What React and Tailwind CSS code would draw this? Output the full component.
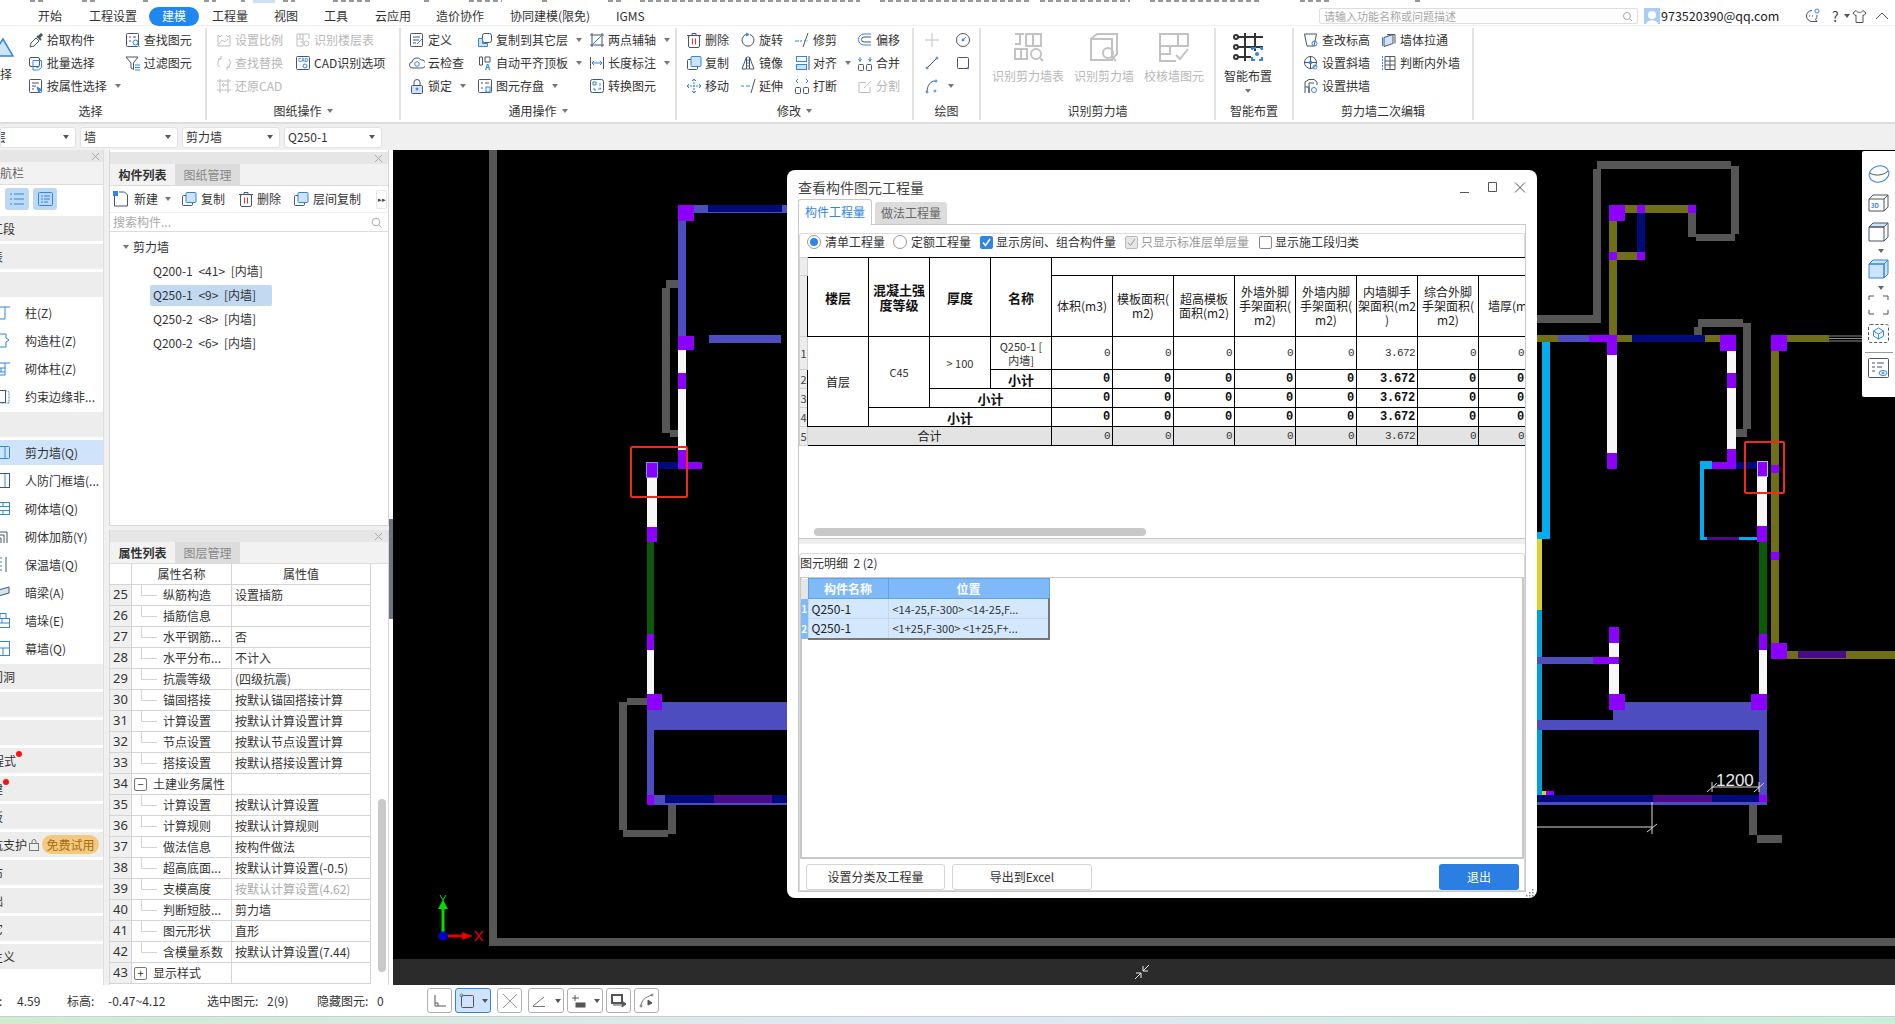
import React from "react";

const D = "#4a5464";
const B = "#2f86e6";
const G = "#bdbdbd";
const L = "#cfe3fb";

const Svg = ({ s = 16, w, h, vb, c = D, children }) => (
  <svg width={w || s} height={h || s} viewBox={vb || `0 0 ${s} ${s}`} fill="none" stroke={c} strokeWidth="1" className="shrink-0">
    {children}
  </svg>
);

const icons = {
  pick: <><path d="M2 15l1-4 5-5 3 3-5 5z" /><path d="M9 4l4 4" stroke={D} strokeWidth="2" /><path d="M11 5l3-3" stroke={D} strokeWidth="3" /></>,
  batch: <><rect x="1.500" y="2.500" width="10" height="9" rx="1.500" /><path d="M5 5.500h8.500v7l-3 2.500H5z" stroke={B} /><path d="M7.500 11l2 2 2.500-3" stroke={B} /></>,
  attr: <><rect x="1.500" y="1.500" width="12" height="13" rx="1" /><path d="M4 5h7M4 8h4M4 11h2" /><path d="M9 9l5 3-2 .5-1 2.500z" fill={B} stroke={B} /></>,
  find: <><rect x="1.500" y="1.500" width="12" height="13" rx="1" /><path d="M4 5h2M8 5h3M4 9h2" /><circle cx="10.500" cy="10.500" r="2.500" stroke={B} /><path d="M12.500 12.500l2 2" stroke={B} /></>,
  filter: <><path d="M1 2h12L8.500 8v6.500L6 13V8z" /><path d="M10 10h5M10 12.500h5M10 15h5" stroke={B} /></>,
  dscale: <><path d="M2 3v11h12V3M2 3l2 2 2-2M10 3l2 2 2-2M3 12l3-4 3 2 3-3" stroke={G} /></>,
  dreplace: <><path d="M3 12a6 6 0 0 1 2-9M13 4a6 6 0 0 1-2 9M5 1v3H2M11 15v-3h3" stroke={G} /></>,
  drestore: <><path d="M1 3h14M4 1v14M12 1v14M1 12h14" stroke={G} /><path d="M6 7h6M8 5l-2 2 2 2" stroke={G} /></>,
  dfloor: <><path d="M2 2h6v5H2zM5 2v5M8 2h6v5M2 7v7h6V7M5 10h3" stroke={G} /><circle cx="11.500" cy="11.500" r="2.500" stroke={G} /></>,
  cad: <><rect x="1.500" y="1.500" width="13" height="13" rx="1" /><text x="3" y="7" fontSize="5" fill={B} stroke="none" fontWeight="700">CAD</text><circle cx="10" cy="11" r="2" stroke={B} /></>,
  def: <><rect x="1.500" y="1.500" width="12" height="13" rx="1" /><path d="M4 5h7M4 8h6M4 11h3" /><path d="M8 12l6-6" stroke={B} /></>,
  cloud: <><path d="M4 13a3 3 0 0 1-1-6 5 5 0 0 1 9-2 4 4 0 0 1 1 8z" /><circle cx="8" cy="9" r="2.300" stroke={B} /></>,
  lock: <><rect x="2.500" y="7.500" width="11" height="8" rx="1" fill={L} stroke={D} /><path d="M5 7V4.500a3 3 0 0 1 6 0V7" /><circle cx="8" cy="11" r="1" fill={B} stroke={B} /></>,
  copyf: <><rect x="5.500" y="1.500" width="9" height="9" rx="2" /><path d="M1.500 6.500h4v5h5v3h-9z" fill={L} stroke={B} /></>,
  align: <><path d="M2.500 2v8M5.500 2v8M2.500 2h3M2.500 10h3" /><path d="M8 2h5v5H8z" /><text x="8" y="15" fontSize="8" fill={B} stroke="none" fontWeight="700">A</text></>,
  save: <><rect x="1.500" y="1.500" width="13" height="13" rx="1" /><path d="M4 5h2M8 5h4M4 10h2" /><rect x="9" y="9" width="4" height="5" stroke={B} /></>,
  axis: <><path d="M3 1v14M13 1v14M1 3h14M1 13h14" /><path d="M2 14L14 2" stroke={B} /></>,
  dim: <><path d="M1.500 2v12M14.500 2v12" /><path d="M3 8h10M5 6L3 8l2 2M11 6l2 2-2 2" stroke={B} /></>,
  conv: <><rect x="1.500" y="1.500" width="13" height="13" rx="2" /><path d="M4 4h3v3H4zM5 10v2h2M11 5v3M9 11h3l-1-1.500" stroke={B} /></>,
  del: <><rect x="2.500" y="3.500" width="11" height="12" rx="1.500" /><path d="M1 3.500h14M6 3V1.500h4V3" /><path d="M6.500 6.500v6M9.500 6.500v6" stroke="#e02f2f" /></>,
  rotate: <><path d="M10 2.500a6 6 0 1 1-4 0" /><path d="M6 1l3 1.500L6 4" fill={B} stroke={B} /></>,
  trim: <><path d="M1 9h4M6 9h2" stroke={B} /><path d="M14 1l-5 14" stroke={D} /><path d="M10 9h5" stroke={B} strokeDasharray="1 1.500" /></>,
  offset: <><path d="M14 2H7a5 5 0 0 0 0 11h7" stroke={B} /><path d="M14 5H7a2.500 2.500 0 0 0 0 5h7" /></>,
  copy: <><rect x="1.500" y="4.500" width="10" height="10" rx="1" /><rect x="5" y="1.500" width="10" height="10" rx="1" fill={L} stroke={B} /></>,
  mirror: <><path d="M6.500 2L2 14h4.500zM9.500 2L14 14H9.500z" /><path d="M8 1v14" stroke={B} strokeDasharray="2 1" /></>,
  alignb: <><rect x="2.500" y="1.500" width="10" height="5" stroke={B} /><rect x="2.500" y="9.500" width="10" height="5" fill={L} stroke={B} /><path d="M15 1v14" /></>,
  merge: <><rect x="1.500" y="9.500" width="5" height="6" rx="1" /><rect x="9.500" y="9.500" width="5" height="6" rx="1" /><path d="M3 2v5M13 2v5M1.500 4l1.500 2 1.500-2M11.500 4l1.500 2 1.500-2" stroke={B} /></>,
  move: <><path d="M8 1v14M1 8h14" stroke={B} strokeDasharray="2 1" /><path d="M6 3l2-2 2 2M6 13l2 2 2-2M3 6L1 8l2 2M13 6l2 2-2 2" stroke={B} /></>,
  extend: <><path d="M1 8h3M6 8h3" stroke={B} /><path d="M15 1l-4 14" /><path d="M10 8h-1" stroke={B} /></>,
  brk: <><rect x="1.500" y="9.500" width="5" height="6" rx="1" /><rect x="9.500" y="9.500" width="5" height="6" rx="1" /><path d="M2 3l2-2M2 3l2 2M14 3l-2-2M14 3l-2 2" stroke={B} /></>,
  split: <><path d="M13 9v5.500H2v-10h7" stroke={G} /><path d="M7 10l7-7" stroke={G} /></>,
  dot: <><path d="M8 1v5M8 10v5M1 8h5M10 8h5" stroke={G} /><circle cx="8" cy="8" r="1.200" stroke={G} /></>,
  circ: <><circle cx="8" cy="8" r="6.500" /><path d="M8 8l3-3" stroke={B} /><circle cx="8" cy="8" r="1" fill={B} stroke={B} /></>,
  line: <><path d="M3 13L13 3" /><circle cx="3" cy="13" r="1" stroke={B} /><circle cx="13" cy="3" r="1" stroke={B} /></>,
  rect: <><rect x="2.500" y="2.500" width="11" height="11" rx="1" /><circle cx="13" cy="13" r=".8" fill={B} stroke={B} /></>,
  arc: <><path d="M3 14C3 7 7 3 11 3" /><circle cx="3" cy="14" r="1" stroke={B} /><circle cx="12" cy="3" r="1" stroke={B} /><circle cx="11" cy="13" r="1" stroke={B} /></>,
  elev: <><path d="M1.500 2h12L11 14H4z" /><circle cx="11.500" cy="11.500" r="2.500" stroke={B} /></>,
  pull: <><path d="M3 5.500l9-3v9l-9 3z" fill={L} stroke={D} /><path d="M6 2.500h8v9" /><path d="M1.500 5v9" stroke={B} /></>,
  slant: <><circle cx="7.500" cy="7.500" r="6" /><path d="M7.500 1v13M1 7.500h13" /><circle cx="7.500" cy="7.500" r="1.500" fill={B} stroke={B} /><circle cx="12" cy="12" r="2" stroke={B} /></>,
  inout: <><path d="M4 1.500h10v13H4zM9 1.500v13M4 6h10M4 10h10" /><path d="M1.500 1v14" stroke={B} strokeDasharray="2 1" /></>,
  archw: <><path d="M2 15V4l4-2.500h5L14 4v3M2 9h4v6M6 15V5h5" /><circle cx="11" cy="12" r="2.500" stroke={B} /></>,
};

const I = ({ n }) => <Svg>{icons[n]}</Svg>;
const Caret = ({ c = "#777" }) => <span className="inline-block w-0 h-0 border-x-[3px] border-x-transparent border-t-[4px] ml-[5px] shrink-0" style={{ borderTopColor: c }} />;

const Item = ({ icon, t, caret, off, className = "" }) => (
  <div className={`flex items-center h-[23px] gap-[3px] text-[12px] leading-[16px] whitespace-nowrap ${off ? "text-[#b8b8b8]" : "text-[#333]"} ${className}`}>
    <I n={icon} />
    {t && <span>{t}</span>}
    {caret && <Caret />}
  </div>
);

const Group = ({ w, label, caret, children, pad, labelCls = "" }) => (
  <div className={`${w} h-[92px] border-r-2 border-[#e2e2e2] flex flex-col shrink-0`}>
    <div className={`flex h-[71px] ${pad}`}>{children}</div>
    <div className={`flex items-center justify-center h-[18px] mt-[4px] text-[12px] leading-[16px] text-[#333] ${labelCls}`}>
      {label}
      {caret && <Caret />}
    </div>
  </div>
);

const BigIco = ({ children }) => (
  <svg width="32" height="32" viewBox="0 0 32 32" fill="none" stroke="#c2c2c2" strokeWidth="2" className="shrink-0 mt-[3px]">{children}</svg>
);

const menu = [
  ["开始", "ml-[38px] w-[24px]"], ["工程设置", "ml-[27px] w-[48px]"],
];
const Menu = () => (
  <div className="flex items-center h-[22px] pt-[3px] text-[12px] leading-[16px] text-[#333] whitespace-nowrap border-b border-[#eeeeee]">
    {menu.map(([t, c]) => <span key={t} className={c}>{t}</span>)}
    <span className="ml-[12px] w-[50px] h-[19px] rounded-full bg-[#1e88f0] text-white flex items-center justify-center">建模</span>
    <span className="ml-[13px] w-[36px]">工程量</span>
    <span className="ml-[26px] w-[24px]">视图</span>
    <span className="ml-[26px] w-[24px]">工具</span>
    <span className="ml-[27px] w-[36px]">云应用</span>
    <span className="ml-[25px] w-[48px]">造价协作</span>
    <span className="ml-[26px] w-[80px]">协同建模(限免)</span>
    <span className="ml-[26px] w-[40px]">IGMS</span>
    <div className="ml-auto w-[576px] flex items-center">
      <div className="w-[319px] h-[16px] border border-[#dedede] rounded-[2px] flex items-center justify-between px-[4px] text-[11px] text-[#a6a6a6]">
        <span>请输入功能名称或问题描述</span>
        <svg width="11" height="11" viewBox="0 0 11 11" fill="none" stroke="#aaa"><circle cx="5" cy="5" r="3.500" /><path d="M8 8l2 2" /></svg>
      </div>
      <svg width="16" height="16" viewBox="0 0 16 16" className="ml-[6px] shrink-0"><rect width="16" height="16" fill="#a9cdf5" /><circle cx="8" cy="7" r="4" fill="#fff" /><path d="M2 16c1-5 11-5 12 0z" fill="#fff" /></svg>
      <span className="ml-[1px] text-[12.5px] text-[#222] w-[143px]">973520390@qq.com</span>
      <svg width="16" height="16" viewBox="0 0 16 16" fill="none" stroke={D}><path d="M8 2.500a5.500 5.500 0 1 0 0 11h5l-1.500-2A5.500 5.500 0 0 0 13 7" /><circle cx="13" cy="3" r="2" stroke={B} /><path d="M5 8h1M8 8h1" /></svg>
      <span className="ml-[12px] text-[14px] text-[#444] flex items-center w-[14px]">?<Caret c="#555" /></span>
      <svg width="15" height="15" viewBox="0 0 15 15" fill="none" stroke={D} className="ml-[6px]"><path d="M4 1.500L1 4l2 2.500 1-.5v7.500h7V6l1 .5L14 4l-3-2.500C10 4 5 4 4 1.500z" /></svg>
      <svg width="14" height="14" viewBox="0 0 14 14" fill="none" stroke={D} className="ml-[8px]"><path d="M1 10l6-6 6 6" /></svg>
    </div>
  </div>
);

const Ribbon = () => (
  <div className="h-[124px] bg-white border-b-2 border-[#dddddd] shrink-0">
    <svg className="block" width="1895" height="4"><path d="M30 1h15M82 1h14M143 1h8M204 1h12M241 1h4M283 1h12M333 1h37M424 1h8M469 1h33M542 1h6M608 1h16M640 1h220M880 1h150M1040 1h90M1150 1h110M1300 1h30M1415 1h5" stroke="#777" strokeWidth="1.500" strokeDasharray="5 3" /><rect x="253" y="0" width="22" height="3" fill="#cfe0f2" /></svg>
    <Menu />
    <div className="flex mt-[2px]">
      <Group w="w-[207px]" label="选择" pad="" labelCls="pr-[24px]">
        <div className="w-[28px] flex flex-col overflow-hidden">
          <svg width="14" height="20" viewBox="0 0 14 20" className="mt-[9px] shrink-0"><path d="M-8 19L3 2l10 17z" fill={L} stroke={B} strokeWidth="1.500" /></svg>
          <span className="mt-[9px] -ml-[12px] text-[12px] leading-[16px] text-[#333] whitespace-nowrap">选择</span>
        </div>
        <div className="w-[98px]"><Item icon="pick" t="拾取构件" /><Item icon="batch" t="批量选择" /><Item icon="attr" t="按属性选择" caret /></div>
        <div className="w-[81px]"><Item icon="find" t="查找图元" /><Item icon="filter" t="过滤图元" /></div>
      </Group>
      <Group w="w-[194px]" label="图纸操作" caret pad="pl-[9px]">
        <div className="w-[79px]"><Item icon="dscale" t="设置比例" off /><Item icon="dreplace" t="查找替换" off /><Item icon="drestore" t="还原CAD" off /></div>
        <div><Item icon="dfloor" t="识别楼层表" off /><Item icon="cad" t="CAD识别选项" /></div>
      </Group>
      <Group w="w-[276px]" label="通用操作" caret pad="pl-[8px]">
        <div className="w-[68px]"><Item icon="def" t="定义" /><Item icon="cloud" t="云检查" /><Item icon="lock" t="锁定" caret /></div>
        <div className="w-[112px]"><Item icon="copyf" t="复制到其它层" caret /><Item icon="align" t="自动平齐顶板" caret /><Item icon="save" t="图元存盘" caret /></div>
        <div><Item icon="axis" t="两点辅轴" caret /><Item icon="dim" t="长度标注" caret /><Item icon="conv" t="转换图元" /></div>
      </Group>
      <Group w="w-[237px]" label="修改" caret pad="pl-[9px]">
        <div className="w-[54px]"><Item icon="del" t="删除" /><Item icon="copy" t="复制" /><Item icon="move" t="移动" /></div>
        <div className="w-[54px]"><Item icon="rotate" t="旋转" /><Item icon="mirror" t="镜像" /><Item icon="extend" t="延伸" /></div>
        <div className="w-[63px]"><Item icon="trim" t="修剪" /><Item icon="alignb" t="对齐" caret /><Item icon="brk" t="打断" /></div>
        <div><Item icon="offset" t="偏移" /><Item icon="merge" t="合并" /><Item icon="split" t="分割" off /></div>
      </Group>
      <Group w="w-[67px]" label="绘图" pad="pl-[10px]">
        <div className="w-[31px]"><Item icon="dot" /><Item icon="line" /><Item icon="arc" caret /></div>
        <div><Item icon="circ" /><Item icon="rect" /></div>
      </Group>
      <Group w="w-[235px]" label="识别剪力墙" pad="pl-[6px]">
        <div className="w-[82px] flex flex-col items-center text-[12px] leading-[16px] text-[#b8b8b8] whitespace-nowrap">
          <BigIco><path d="M3 3h9M8 3v10H3M14 3h15v12H14zM21 3v12M3 18h12v10H3zM9 18v10" /><circle cx="24" cy="23" r="5" /><path d="M28 27l3 3" /></BigIco>
          <span className="mt-[5px]">识别剪力墙表</span>
        </div>
        <div className="w-[70px] flex flex-col items-center text-[12px] leading-[16px] text-[#b8b8b8] whitespace-nowrap">
          <BigIco><path d="M3 8h21v21H3zM3 8l6-5h20v20l-5 5" /><circle cx="20" cy="22" r="5" /><path d="M24 26l4 4" /></BigIco>
          <span className="mt-[5px]">识别剪力墙</span>
        </div>
        <div className="w-[70px] flex flex-col items-center text-[12px] leading-[16px] text-[#b8b8b8] whitespace-nowrap">
          <BigIco><path d="M2 3h28v12H2zM20 3v12M2 3v27h16M2 15h10v8H2" /><path d="M18 24l4 4 8-10" /></BigIco>
          <span className="mt-[5px]">校核墙图元</span>
        </div>
      </Group>
      <Group w="w-[78px]" label="智能布置" pad="justify-center pr-[12px]">
        <div className="flex flex-col items-center text-[12px] leading-[16px] text-[#333] whitespace-nowrap">
          <svg width="32" height="32" viewBox="0 0 32 32" fill="none" stroke="#333" strokeWidth="2" className="shrink-0 mt-[3px]"><path d="M5 6h26M5 16h26M5 26h14M13 2v28M23 2v18" /><circle cx="4" cy="6" r="2" /><circle cx="4" cy="16" r="2" /><circle cx="4" cy="26" r="2" /><path d="M20 19v-2h4M28 17h2v2M30 26v3h-3M23 29h-3v-3" stroke={B} strokeWidth="2" /><circle cx="25" cy="23" r="1" fill={B} stroke={B} /></svg>
          <span className="mt-[5px]">智能布置</span>
          <span className="mt-[5px] flex h-[4px] -ml-[5px]"><Caret /></span>
        </div>
      </Group>
      <Group w="w-[180px]" label="剪力墙二次编辑" pad="pl-[9px]">
        <div className="w-[78px]"><Item icon="elev" t="查改标高" /><Item icon="slant" t="设置斜墙" /><Item icon="archw" t="设置拱墙" /></div>
        <div><Item icon="pull" t="墙体拉通" /><Item icon="inout" t="判断内外墙" /></div>
      </Group>
    </div>
  </div>
);

const Select = ({ w, t, clip }) => (
  <div className={`${w} h-[21px] bg-white border border-[#e2e2e2] rounded-[3px] flex items-center justify-between pl-[3px] pr-[6px] text-[12px] text-[#333] overflow-hidden whitespace-nowrap`}>
    <span className={clip ? "-ml-[10px]" : ""}>{t}</span>
    <Caret c="#555" />
  </div>
);

const Toolbar = () => (
  <div className="h-[26px] bg-[#f0f0f0] flex items-center gap-[4px] shrink-0">
    <Select w="w-[76px]" t="层" clip />
    <Select w="w-[98px]" t="墙" />
    <Select w="w-[98px]" t="剪力墙" />
    <Select w="w-[98px]" t="Q250-1" />
  </div>
);

const X = () => <svg width="9" height="9" viewBox="0 0 9 9" stroke="#aaa" fill="none"><path d="M1 1l7 7M8 1l-7 7" /></svg>;

const NavSec = ({ children }) => (
  <div className="h-[25px] shrink-0 bg-[#ededed] flex items-center text-[12px] text-[#333] overflow-hidden whitespace-nowrap relative">{children}</div>
);
const NavItem = ({ icon, t, on }) => (
  <div className={`h-[25px] shrink-0 flex items-center text-[12px] text-[#333] whitespace-nowrap overflow-hidden ${on ? "bg-[#cfe4fb]" : ""}`}>
    <span className="w-[25px] shrink-0 overflow-hidden flex justify-start">
      <span className="-ml-[6px] flex"><svg width="17" height="17" viewBox="0 0 17 17" fill="none" stroke={B} className="shrink-0">{icon}</svg></span>
    </span>
    <span>{t}</span>
  </div>
);

const sq = <rect x="1.500" y="2.500" width="14" height="12" rx="1" />;
const Nav = () => (
  <div className="w-[104px] shrink-0 h-full bg-white flex flex-col overflow-hidden border-r border-[#dddddd]">
    <div className="h-[12px] bg-[#e6e6e6] flex items-center justify-end pr-[3px] shrink-0"><X /></div>
    <div className="h-[22px] bg-[#f2f2f2] flex items-center text-[12px] text-[#666] shrink-0 whitespace-nowrap"><span className="-ml-[12px]">导航栏</span></div>
    <div className="h-[29px] flex items-center pl-[5px] gap-[4px] border-t border-[#dddddd] shrink-0">
      <span className="w-[24px] h-[22px] bg-[#bcd8f5] rounded-[3px] flex items-center justify-center"><svg width="16" height="14" viewBox="0 0 16 14" stroke={B} fill="none"><path d="M5 2h10M5 7h10M5 12h10M1 2h2M1 7h2M1 12h2" /></svg></span>
      <span className="w-[24px] h-[22px] bg-[#bcd8f5] rounded-[3px] flex items-center justify-center"><svg width="15" height="14" viewBox="0 0 15 14" stroke={B} fill="none"><rect x=".5" y=".5" width="14" height="13" rx="1" /><path d="M3 4h2M6 4h6M3 7h2M6 7h6M3 10h2M6 10h4" /></svg></span>
    </div>
    <div className="flex flex-col gap-[3px] mt-[3px]">
      <NavSec><span className="-ml-[9px]">工段</span></NavSec>
      <NavSec><span className="-ml-[9px]">表</span></NavSec>
      <NavSec />
      <NavItem t="柱(Z)" icon={<><path d="M1 3h15M3 3v12h8V3" /></>} />
      <NavItem t="构造柱(Z)" icon={<><path d="M2 2h10v4l3 2-3 2v5H2" /></>} />
      <NavItem t="砌体柱(Z)" icon={<><path d="M1 3h15M3 3v12h8V3M3 8h8M3 12h8M7 8v4" /></>} />
      <NavItem t="约束边缘非..." icon={<><rect x="1.500" y="2.500" width="10" height="12" stroke={D} /><path d="M11 2l4 2v11H2" strokeDasharray="2 1" /></>} />
      <NavSec />
      <NavItem on t="剪力墙(Q)" icon={<>{sq}<path d="M11 2.500v12" /></>} />
      <NavItem t="人防门框墙(..." icon={<><rect x="1.500" y="1.500" width="14" height="14" stroke={D} /><path d="M11 2v13" stroke={B} /></>} />
      <NavItem t="砌体墙(Q)" icon={<><rect x="1.500" y="2.500" width="14" height="12" /><path d="M1 6.500h14M1 10.500h14M9 2v4M5 7v4M9 11v4" /></>} />
      <NavItem t="砌体加筋(Y)" icon={<><path d="M13 15V4H1M10 15V7H1M7 15V10H1" stroke={D} /></>} />
      <NavItem t="保温墙(Q)" icon={<><path d="M3 1v15M12 1v15" stroke={D} /><path d="M7 1v15" strokeDasharray="2 2" /></>} />
      <NavItem t="暗梁(A)" icon={<><path d="M1 7l14-4v6L1 13z" fill={L} stroke={D} /></>} />
      <NavItem t="墙垛(E)" icon={<><rect x="1.500" y="6.500" width="14" height="9" /><rect x="6" y="1.500" width="6" height="5" /><path d="M1 11h14M8 7v4" /></>} />
      <NavItem t="幕墙(Q)" icon={<><rect x="1.500" y="1.500" width="14" height="14" /><path d="M1 8h14M9 8v8" /></>} />
      <NavSec><span className="-ml-[9px]">门洞</span></NavSec>
      <NavSec />
      <NavSec />
      <NavSec><span className="-ml-[8px]">程式</span><span className="w-[6px] h-[6px] rounded-full bg-[#ff1010] -mt-[13px] ml-[0px]" /></NavSec>
      <NavSec><span className="-ml-[9px]">建</span><span className="w-[6px] h-[6px] rounded-full bg-[#ff1010] -mt-[13px]" /></NavSec>
      <NavSec><span className="-ml-[9px]">板</span></NavSec>
      <NavSec>
        <span className="-ml-[9px]">坑支护</span>
        <svg width="10" height="12" viewBox="0 0 10 12" fill="none" stroke="#777" className="ml-[2px] shrink-0"><rect x=".5" y="4.500" width="9" height="7" /><path d="M3 4V2.500a2 2 0 0 1 4 0V4" /></svg>
        <span className="ml-[3px] w-[57px] h-[19px] rounded-full bg-[#f3c97e] text-[#a56a12] flex items-center justify-center shrink-0">免费试用</span>
      </NavSec>
      <NavSec><span className="-ml-[9px]">布</span></NavSec>
      <NavSec><span className="-ml-[9px]">础</span></NavSec>
      <NavSec><span className="-ml-[9px]">它</span></NavSec>
      <NavSec><span className="-ml-[9px]">主义</span></NavSec>
    </div>
  </div>
);

const PanelHead = ({ a, b }) => (
  <>
    <div className="h-[12px] bg-[#e6e6e6] flex items-center justify-end pr-[5px] shrink-0"><X /></div>
    <div className="h-[22px] bg-[#f2f2f2] flex border-b border-[#dddddd] text-[12px] shrink-0">
      <span className="w-[65px] flex items-center justify-center font-bold text-[#333]">{a}</span>
      <span className="w-[65px] flex items-center justify-center bg-[#dcdcdc] text-[#888]">{b}</span>
    </div>
  </>
);

const CompPanel = () => (
  <div className="h-[376px] flex flex-col border-x border-b border-[#d6d6d6] bg-white shrink-0 text-[12px] text-[#333]">
    <div className="mt-[2px]" />
    <PanelHead a="构件列表" b="图纸管理" />
    <div className="h-[27px] flex items-center pl-[3px] border-b border-[#eeeeee] shrink-0 whitespace-nowrap">
      <svg width="16" height="16" viewBox="0 0 16 16" fill="none" stroke={D} className="shrink-0"><path d="M1.500 3v12h13V4l-3-3H6" /><rect x="0" y="0" width="5" height="5" fill={B} stroke="none" /></svg>
      <span className="ml-[5px]">新建</span><span className="ml-[2px] flex"><Caret /></span>
      <span className="ml-[10px] flex"><I n="copy" /></span><span className="ml-[4px]">复制</span>
      <span className="ml-[13px] flex"><I n="del" /></span><span className="ml-[3px]">删除</span>
      <span className="ml-[12px] flex"><I n="copy" /></span><span className="ml-[4px]">层间复制</span>
      <span className="ml-[15px] w-[11px] h-[19px] border border-[#e6e6e6] rounded-[2px] flex items-center justify-center text-[7px] text-[#444] shrink-0">▸▸</span>
    </div>
    <div className="h-[19px] flex items-center justify-between px-[3px] pr-[6px] text-[#aaa] border-b border-[#dddddd] shrink-0">
      <span>搜索构件...</span>
      <svg width="11" height="11" viewBox="0 0 11 11" fill="none" stroke="#aaa"><circle cx="5" cy="5" r="3.800" /><path d="M8 8l2.500 2.500" /></svg>
    </div>
    <div className="flex-1 pt-[3px] [word-spacing:3px]">
      <div className="h-[24px] flex items-center pl-[8px]"><Caret c="#777" /><span className="ml-[4px]">剪力墙</span></div>
      <div className="h-[24px] flex items-center pl-[43px]"><span>Q200-1 &lt;41&gt; [内墙]</span></div>
      <div className="h-[24px] flex items-center pl-[40px]"><span className="w-[122px] h-[21px] bg-[#c2d9f2] rounded-[2px] flex items-center pl-[3px]">Q250-1 &lt;9&gt; [内墙]</span></div>
      <div className="h-[24px] flex items-center pl-[43px]"><span>Q250-2 &lt;8&gt; [内墙]</span></div>
      <div className="h-[24px] flex items-center pl-[43px]"><span>Q200-2 &lt;6&gt; [内墙]</span></div>
    </div>
  </div>
);

const props = [
  [25, "纵筋构造", "设置插筋"], [26, "插筋信息", ""], [27, "水平钢筋...", "否"], [28, "水平分布...", "不计入"],
  [29, "抗震等级", "(四级抗震)"], [30, "锚固搭接", "按默认锚固搭接计算"], [31, "计算设置", "按默认计算设置计算"],
  [32, "节点设置", "按默认节点设置计算"], [33, "搭接设置", "按默认搭接设置计算"], [34, "土建业务属性", "", "-"],
  [35, "计算设置", "按默认计算设置"], [36, "计算规则", "按默认计算规则"], [37, "做法信息", "按构件做法"],
  [38, "超高底面...", "按默认计算设置(-0.5)"], [39, "支模高度", "按默认计算设置(4.62)", "g"], [40, "判断短肢...", "剪力墙"],
  [41, "图元形状", "直形"], [42, "含模量系数", "按默认计算设置(7.44)"], [43, "显示样式", "", "+"],
];

const PropPanel = () => (
  <div className="h-[455px] flex flex-col border-x border-[#d6d6d6] bg-white text-[12px] text-[#333] whitespace-nowrap">
    <PanelHead a="属性列表" b="图层管理" />
    <div className="flex-1 flex min-h-0">
      <div className="w-[261px] shrink-0">
        <div className="h-[21px] flex border-b border-[#d4d4d4]">
          <span className="w-[22px] border-r border-[#d4d4d4]" />
          <span className="w-[100px] border-r border-[#d4d4d4] flex items-center justify-center">属性名称</span>
          <span className="flex-1 border-r border-[#d4d4d4] flex items-center justify-center">属性值</span>
        </div>
        {props.map(([n, k, v, f]) => {
          const box = f === "-" || f === "+";
          return (
            <div key={n} className="h-[21px] flex border-b border-[#d4d4d4]">
              <span className="w-[22px] bg-[#f0f0f0] border-r border-[#d4d4d4] flex items-center justify-center text-[13px] font-['Noto_Sans',sans-serif]">{n}</span>
              <span className="w-[100px] border-r border-[#d4d4d4] flex items-center relative">
                {box ? (
                  <>
                    <span className="ml-[2px] w-[13px] h-[13px] border border-[#777] rounded-[2px] flex items-center justify-center text-[11px] leading-none">{f === "-" ? "−" : "+"}</span>
                    <span className="ml-[6px]">{k}</span>
                  </>
                ) : (
                  <>
                    <span className="ml-[9px] w-[16px] border-t border-[#d4d4d4]" />
                    <span className="ml-[6px]">{k}</span>
                    <span className="absolute left-[9px] top-0 h-[11px] border-l border-[#d4d4d4]" />
                  </>
                )}
              </span>
              <span className={`flex-1 border-r border-[#d4d4d4] flex items-center pl-[3px] ${f === "g" ? "text-[#aaa]" : ""}`}>{v}</span>
            </div>
          );
        })}
      </div>
      <div className="flex-1 relative">
        <span className="absolute right-[2px] bottom-[13px] w-[8px] h-[173px] rounded-full bg-[#c9c9c9]" />
      </div>
    </div>
  </div>
);

const C = { p: "#8b00ff", b: "#4d4dbf", n: "#000a7a", d: "#4a0a8a", w: "#f7f7f7", g: "#0a5a0a", a: "#565656", o: "#6f6f17", c: "#00aeef", y: "#d4d42a", e: "#00a0d8" };
const rects = [
  ["a", 489, 150, 497, 946], ["a", 493, 938, 1895, 946],
  ["a", 662, 288, 670, 433], ["a", 666, 280, 678, 288], ["a", 670, 430, 678, 437],
  ["a", 619, 702, 627, 830], ["a", 627, 698, 647, 705], ["a", 623, 830, 668, 837], ["a", 668, 805, 676, 834],
  ["b", 694, 205, 787, 213], ["n", 708, 205, 782, 212], ["b", 678, 221, 686, 336], ["p", 678, 205, 694, 221], ["p", 678, 336, 694, 350],
  ["b", 709, 335, 781, 343],
  ["w", 678, 350, 686, 450], ["p", 678, 373, 686, 389], ["p", 678, 450, 686, 469], ["p", 686, 462, 702, 469], ["n", 657, 462, 678, 469],
  ["w", 647, 477, 657, 527], ["p", 647, 527, 657, 542], ["g", 647, 542, 654, 634], ["p", 647, 634, 654, 650], ["w", 647, 650, 654, 694],
  ["b", 647, 702, 787, 730], ["b", 647, 730, 654, 805], ["b", 647, 795, 787, 805], ["p", 647, 694, 662, 710], ["p", 647, 795, 654, 805],
  ["n", 665, 795, 714, 803], ["d", 714, 795, 772, 803], ["n", 772, 795, 787, 803],

  ["a", 1593, 169, 1601, 322], ["a", 1597, 161, 1731, 169], ["a", 1731, 166, 1739, 234], ["a", 1696, 234, 1735, 241], ["a", 1688, 213, 1696, 237], ["a", 1537, 315, 1601, 323],
  ["a", 1743, 323, 1751, 429], ["a", 1698, 319, 1743, 327], ["a", 1694, 327, 1702, 335], ["a", 1736, 429, 1747, 437],
  ["a", 1749, 805, 1757, 835], ["a", 1757, 835, 1782, 843],
  ["o", 1609, 221, 1617, 336], ["o", 1625, 205, 1688, 213], ["n", 1637, 213, 1645, 252], ["o", 1617, 252, 1637, 260],
  ["p", 1609, 205, 1625, 221], ["p", 1637, 205, 1645, 213], ["p", 1688, 205, 1696, 213], ["p", 1609, 252, 1617, 260], ["p", 1637, 252, 1645, 260],
  ["o", 1537, 335, 1558, 342], ["b", 1558, 335, 1589, 342], ["p", 1589, 335, 1617, 342], ["o", 1617, 335, 1632, 342], ["n", 1632, 335, 1705, 342], ["o", 1705, 335, 1720, 342],
  ["p", 1720, 335, 1736, 351], ["p", 1607, 335, 1617, 355], ["w", 1607, 355, 1617, 453], ["p", 1607, 453, 1617, 469],
  ["c", 1542, 342, 1550, 539], ["c", 1537, 532, 1550, 539], ["y", 1537, 539, 1542, 610], ["e", 1537, 610, 1542, 795],
  ["w", 1727, 351, 1736, 449], ["p", 1727, 373, 1736, 388], ["p", 1727, 449, 1736, 469], ["p", 1712, 462, 1736, 469], ["c", 1700, 461, 1712, 469],
  ["c", 1700, 461, 1704, 540], ["c", 1700, 537, 1757, 540], ["d", 1707, 537, 1739, 540], ["n", 1736, 462, 1757, 469],
  ["w", 1757, 477, 1767, 526], ["p", 1757, 526, 1767, 542], ["g", 1759, 542, 1767, 634], ["p", 1759, 634, 1767, 650], ["w", 1759, 650, 1767, 694],
  ["o", 1771, 351, 1779, 643], ["p", 1771, 335, 1787, 351], ["o", 1787, 335, 1829, 342], ["p", 1771, 465, 1779, 473], ["p", 1771, 552, 1779, 560], ["p", 1771, 643, 1787, 659],
  ["o", 1787, 651, 1895, 659], ["d", 1798, 651, 1846, 658],
  ["b", 1613, 702, 1767, 730], ["b", 1537, 720, 1613, 730], ["b", 1759, 730, 1767, 805], ["b", 1537, 795, 1767, 805],
  ["n", 1537, 795, 1653, 802], ["d", 1653, 795, 1712, 802], ["n", 1712, 795, 1759, 802], ["p", 1759, 795, 1767, 802],
  ["y", 1542, 791, 1546, 795], ["p", 1546, 791, 1554, 795],
  ["p", 1609, 627, 1619, 643], ["w", 1609, 643, 1619, 694], ["b", 1537, 657, 1593, 664], ["p", 1593, 657, 1619, 664], ["p", 1609, 694, 1625, 710], ["p", 1751, 694, 1767, 710],
];

const Drawing = () => (
  <svg className="absolute inset-0" width="1502" height="809" viewBox="393 150 1502 809">
    {rects.map(([c, x1, y1, x2, y2], i) => <rect key={i} x={x1} y={y1} width={x2 - x1} height={y2 - y1} fill={C[c]} />)}
    <rect x="646.500" y="462.500" width="11" height="15" fill={C.p} stroke="#7a8fd8" />
    <rect x="1757.500" y="461.500" width="10" height="15" fill={C.p} stroke="#a9c2ea" />
    <path d="M1829 336h33M1829 338.500h33M1829 341h33" stroke="#8a8a8a" />
    <rect x="631" y="447" width="56" height="50" rx="1" fill="none" stroke="#f22a1a" strokeWidth="2" />
    <rect x="1745" y="442" width="39" height="51" rx="1" fill="none" stroke="#f22a1a" strokeWidth="2" />
    <path d="M1712 787h47M1707 792l10-9M1754 792l10-9M1712 782v10M1759 782v10M1537 827h115M1652 802v32M1647 832l10-8" stroke="#d8d8d8" />
    <text x="1716" y="786" fontSize="17" fill="#e8e8e8" fontFamily="Liberation Sans, sans-serif">1200</text>
    <path d="M443 932V905" stroke="#00e000" strokeWidth="3" />
    <path d="M438 909l5-9 5 9z" fill="#00e000" />
    <path d="M440 895l3 5 3-5M443 900v6" stroke="#00e000" fill="none" />
    <path d="M448 936h16" stroke="#e00000" strokeWidth="3" />
    <path d="M462 932l11 4-11 4z" fill="#e00000" />
    <ellipse cx="443" cy="936" rx="5" ry="4.500" fill="#0000c0" />
    <path d="M475 931l8 10M483 931l-8 10" stroke="#e00000" strokeWidth="1.500" />
  </svg>
);

const SideBar = () => (
  <div className="absolute right-0 top-[1px] w-[33px] h-[246px] bg-white rounded-l-[2px] flex flex-col items-center pt-[13px]">
    <svg width="22" height="20" viewBox="0 0 22 20" fill="none" stroke={B} className="shrink-0"><ellipse cx="11" cy="10" rx="10" ry="8" transform="rotate(-15 11 10)" /><path d="M2 9c4 3 13 3 18-2" stroke={D} /></svg>
    <svg width="21" height="18" viewBox="0 0 21 18" fill="none" stroke={D} className="mt-[10px] shrink-0"><path d="M1 5h15v12H1zM1 5l4-4h15v12l-4 4M16 5l4-4" /><text x="3" y="14" fontSize="6" fontWeight="700" fill={B} stroke="none">3D</text></svg>
    <svg width="21" height="20" viewBox="0 0 21 20" fill="none" stroke={D} className="mt-[10px] shrink-0"><path d="M1 5l4-4h15l-4 4z" fill={L} /><path d="M1 5h15v14H1zM16 5l4-4v14l-4 4" /></svg>
    <span className="mt-[7px] h-[6px] flex"><Caret c="#666" /></span>
    <svg width="21" height="20" viewBox="0 0 21 20" fill={L} stroke={B} className="mt-[4px] shrink-0"><path d="M1 5l4-4h15l-4 4zM1 5h15v14H1zM16 5l4-4v14l-4 4z" /></svg>
    <span className="mt-[7px] h-[6px] flex"><Caret c="#666" /></span>
    <svg width="21" height="20" viewBox="0 0 21 20" fill="none" stroke={D} className="mt-[3px] shrink-0"><path d="M1 5V1h5M15 1h5v4M20 15v4h-5M6 19H1v-4" /></svg>
    <svg width="21" height="19" viewBox="0 0 21 19" fill="none" stroke={D} className="mt-[9px] shrink-0"><rect x=".5" y=".5" width="20" height="18" rx="2" strokeDasharray="3 2" /><path d="M10.500 4l5 3v5l-5 3-5-3V7zM5.500 7l5 3 5-3M10.500 10v5" stroke={B} /></svg>
    <span className="w-[28px] border-t border-[#999] mt-[9px]" />
    <svg width="21" height="20" viewBox="0 0 21 20" fill="none" stroke={D} className="mt-[5px] shrink-0"><rect x=".5" y=".5" width="20" height="19" rx="1" /><path d="M4 5h3M9 5h7M4 9h3M9 9h5M4 13h3" /><ellipse cx="15" cy="15" rx="4" ry="2.500" stroke={B} /><circle cx="15" cy="15" r="1" stroke={B} /></svg>
  </div>
);

const hd = "border border-black text-center font-bold text-[13px] leading-[15px] text-[#111] p-0";
const hs = "border border-black text-center text-[12px] leading-[14px] text-[#222] p-0 whitespace-nowrap overflow-hidden";
const nc = "border border-[#cfcfcf] bg-[#ececec] text-[11px] leading-[14px] text-[#444] text-center p-0";
const num = "border border-black text-right pr-[2px] text-[11px] leading-[14px] tracking-[-0.6px] text-[#333] font-['Liberation_Mono',monospace] p-0";
const numB = "border border-black text-right pr-[2px] text-[12px] leading-[14px] tracking-[-0.2px] font-bold text-[#111] font-['Liberation_Mono',monospace] p-0";

const vals = ["0", "0", "0", "0", "0", "3.672", "0"];
const QtyTable = () => (
  <div className="h-[281px] overflow-hidden shrink-0">
    <table className="table-fixed border-collapse w-[740px]">
      <colgroup>
        <col className="w-[8px]" />
        {Array.from({ length: 12 }).map((_, i) => <col key={i} className="w-[61px]" />)}
      </colgroup>
      <tbody>
        <tr className="h-[18px]">
          <td className={nc} />
          <td rowSpan={2} className={hd}>楼层</td>
          <td rowSpan={2} className={hd}>混凝土强<br />度等级</td>
          <td rowSpan={2} className={hd}>厚度</td>
          <td rowSpan={2} className={hd}>名称</td>
          <td colSpan={8} className="border border-black p-0" />
        </tr>
        <tr className="h-[61px]">
          <td className={nc} />
          <td className={hs}>体积(m3)</td>
          <td className={hs}>模板面积(<br />m2)</td>
          <td className={hs}>超高模板<br />面积(m2)</td>
          <td className={hs}>外墙外脚<br />手架面积(<br />m2)</td>
          <td className={hs}>外墙内脚<br />手架面积(<br />m2)</td>
          <td className={hs}>内墙脚手<br />架面积(m2<br />)</td>
          <td className={hs}>综合外脚<br />手架面积(<br />m2)</td>
          <td className={`${hs} !text-left pl-[9px]`}>墙厚(m</td>
        </tr>
        <tr className="h-[33px]">
          <td className={nc}>1</td>
          <td rowSpan={4} className="border border-black text-center text-[12px] leading-[14px] text-[#222] p-0">首层</td>
          <td rowSpan={3} className="border border-black text-center text-[11px] leading-[14px] text-[#333] p-0">C45</td>
          <td rowSpan={2} className="border border-black text-center text-[11px] leading-[14px] text-[#333] p-0">&gt; 100</td>
          <td className="border border-black text-center text-[11px] leading-[14px] text-[#333] p-0">Q250-1 [<br />内墙]</td>
          {vals.map((v, i) => <td key={i} className={num}>{v}</td>)}
          <td className={`${num} !text-left pl-[39px]`}>0</td>
        </tr>
        {[
          ["2", <td key="a" className={hd}>小计</td>],
          ["3", <td key="a" colSpan={2} className={hd}>小计</td>],
          ["4", <td key="a" colSpan={3} className={hd}>小计</td>],
        ].map(([n, cell]) => (
          <tr key={n} className="h-[19px]">
            <td className={nc}>{n}</td>
            {cell}
            {vals.map((v, i) => <td key={i} className={numB}>{v}</td>)}
            <td className={`${numB} !text-left pl-[38px]`}>0.</td>
          </tr>
        ))}
        <tr className="h-[19px] bg-[#e3e3e3]">
          <td className={nc}>5</td>
          <td colSpan={4} className="border border-black text-center text-[12px] leading-[14px] text-[#222] p-0">合计</td>
          {vals.map((v, i) => <td key={i} className={num}>{v}</td>)}
          <td className={`${num} !text-left pl-[39px]`}>0</td>
        </tr>
      </tbody>
    </table>
    <div className="mt-[82px] ml-[15px] w-[332px] h-[8px] bg-[#c8c8c8] rounded-full" />
  </div>
);

const Opt = ({ kind, t, off, className = "" }) => (
  <span className={`flex items-center gap-[4px] ${off ? "text-[#999]" : "text-[#333]"} ${className}`}>
    {kind === "radioOn" && <span className="w-[14px] h-[14px] rounded-full border border-[#999] flex items-center justify-center"><span className="w-[8px] h-[8px] rounded-full bg-[#2f86e6]" /></span>}
    {kind === "radio" && <span className="w-[14px] h-[14px] rounded-full border border-[#999]" />}
    {kind === "check" && <span className="w-[13px] h-[13px] rounded-[2px] bg-[#2f86e6] flex items-center justify-center"><svg width="9" height="9" viewBox="0 0 9 9" fill="none" stroke="#fff" strokeWidth="1.500"><path d="M1 4.500l2.500 3L8 1" /></svg></span>}
    {kind === "dis" && <span className="w-[13px] h-[13px] rounded-[2px] bg-[#e6e6e6] border border-[#bbb] flex items-center justify-center"><svg width="9" height="9" viewBox="0 0 9 9" fill="none" stroke="#999"><path d="M1 4.500l2.500 3L8 1" /></svg></span>}
    {kind === "box" && <span className="w-[13px] h-[13px] rounded-[2px] border border-[#888]" />}
    <span>{t}</span>
  </span>
);

const Dialog = () => (
  <div className="absolute left-[394px] top-[20px] w-[750px] h-[728px] bg-white rounded-[8px] text-[12px] flex flex-col">
    <div className="h-[28px] flex items-center pt-[6px] pl-[11px] shrink-0">
      <span className="text-[14px] leading-[20px] text-[#444]">查看构件图元工程量</span>
      <span className="ml-auto flex items-center pr-[11px]">
        <svg width="66" height="11" viewBox="0 0 66 11" fill="none" stroke="#555"><path d="M0 10.500h9M28.500 .5h8v9h-8zM55 .5l10 10M65 .5l-10 10" /></svg>
      </span>
    </div>
    <div className="ml-[11px] w-[728px] flex-1 flex flex-col mb-[6px]">
      <div className="h-[26px] flex items-end shrink-0">
        <span className="w-[74px] h-[26px] border border-b-0 border-[#c8c8c8] rounded-t-[3px] flex items-center justify-center text-[#2f86e6] bg-white relative top-[1px] pb-[2px]">构件工程量</span>
        <span className="ml-[3px] w-[72px] h-[22px] bg-[#dcdcdc] rounded-t-[3px] flex items-center justify-center text-[#666]">做法工程量</span>
      </div>
      <div className="flex-1 border border-[#c8c8c8] flex flex-col min-h-0">
        <div className="mt-[8px] h-[24px] border border-b-0 border-[#dcdcdc] rounded-t-[3px] flex items-center pl-[7px] pb-[7px] shrink-0 whitespace-nowrap">
          <Opt kind="radioOn" t="清单工程量" />
          <Opt kind="radio" t="定额工程量" className="ml-[8px]" />
          <Opt kind="check" t="显示房间、组合构件量" className="ml-[9px] !gap-[3px]" />
          <Opt kind="dis" t="只显示标准层单层量" off className="ml-[9px] !gap-[3px]" />
          <Opt kind="box" t="显示施工段归类" className="ml-[10px] !gap-[3px]" />
        </div>
        <QtyTable />
        <div className="h-[6px] bg-[#eeeeee] border-t border-[#c8c8c8] shrink-0" />
        <div className="mt-[9px] flex-1 border border-[#d8d8d8] rounded-t-[3px] flex flex-col min-h-0">
          <div className="h-[23px] flex items-center pb-[6px] text-[#333] shrink-0">图元明细&nbsp;&nbsp;2 (2)</div>
          <div className="h-[282px] border-2 border-t border-[#c8c8c8] shrink-0 relative">
            <table className="table-fixed border-collapse w-[248px] -ml-[1px] text-[12px] leading-[16px]">
              <colgroup><col className="w-[7px]" /><col className="w-[80px]" /><col className="w-[161px]" /></colgroup>
              <tbody>
                <tr className="h-[20px]">
                  <td className="bg-[#e6e6e6] p-0" />
                  <td className="bg-[#7fb9f8] border border-[#5ea3ee] text-center text-white font-bold p-0">构件名称</td>
                  <td className="bg-[#7fb9f8] border border-[#5ea3ee] text-center text-white font-bold p-0">位置</td>
                </tr>
                <tr className="h-[20px]">
                  <td className="bg-[#7fb9f8] text-white font-bold text-center text-[10px] p-0">1</td>
                  <td className="bg-[#d3e8fd] border border-[#c8d6e6] pl-[3px] p-0 text-[#222]">Q250-1</td>
                  <td className="bg-[#d3e8fd] border border-[#c8d6e6] border-r-2 border-r-[#777] pl-[4px] text-[11px] text-[#333] p-0 whitespace-nowrap overflow-hidden">&lt;14-25,F-300&gt; &lt;14-25,F...</td>
                </tr>
                <tr className="h-[20px]">
                  <td className="bg-[#7fb9f8] text-white font-bold text-center text-[10px] p-0">2</td>
                  <td className="bg-[#d3e8fd] border border-[#c8d6e6] border-b-2 border-b-[#777] pl-[3px] p-0 text-[#222]">Q250-1</td>
                  <td className="bg-[#d3e8fd] border border-[#c8d6e6] border-r-2 border-r-[#777] border-b-2 border-b-[#777] pl-[4px] text-[11px] text-[#333] p-0 whitespace-nowrap overflow-hidden">&lt;1+25,F-300&gt; &lt;1+25,F+...</td>
                </tr>
              </tbody>
            </table>
          </div>
          <div className="flex-1 flex items-center pl-[6px] pr-[5px] min-h-0 pt-[4px]">
            <span className="w-[139px] h-[26px] border border-[#d4d4d4] rounded-[3px] flex items-center justify-center text-[#333]">设置分类及工程量</span>
            <span className="ml-[7px] w-[140px] h-[26px] border border-[#d4d4d4] rounded-[3px] flex items-center justify-center text-[#333]">导出到Excel</span>
            <span className="ml-auto w-[80px] h-[26px] rounded-[3px] bg-[#2b7fe3] flex items-center justify-center text-white">退出</span>
          </div>
        </div>
      </div>
    </div>
    <svg width="8" height="8" viewBox="0 0 8 8" fill="#888" className="absolute right-[3px] bottom-[1px]"><path d="M6 0h1.500v1.500H6zM3 3h1.500v1.500H3zM6 3h1.500v1.500H6zM0 6h1.500v1.500H0zM3 6h1.500v1.500H3zM6 6h1.500v1.500H6z" /></svg>
  </div>
);

const Canvas = () => (
  <div className="flex-1 h-full flex flex-col min-w-0">
    <div className="h-[809px] bg-black relative overflow-hidden shrink-0">
      <Drawing />
      <Dialog />
      <SideBar />
    </div>
    <div className="flex-1 bg-[#2b2b2b] flex items-center">
      <svg width="16" height="16" viewBox="0 0 16 16" fill="none" stroke="#eee" className="ml-[741px]"><path d="M1 15l6-6M2 9h5v5M15 1L9 7M14 7H9V2" /></svg>
    </div>
  </div>
);

const Btn = ({ w, on, children, className = "" }) => (
  <span className={`${w} h-[25px] rounded-[3px] border flex items-center justify-center gap-[3px] shrink-0 ${on ? "bg-[#cfe3fb] border-[#2f86e6]" : "border-[#b0b0b0] bg-white"} ${className}`}>{children}</span>
);

const Status = () => (
  <div className="h-[32px] bg-white flex items-center text-[12px] text-[#333] whitespace-nowrap shrink-0 border-b border-[#c9cdd4]">
    <span className="-ml-[1px] w-[18px]">:</span>
    <span className="w-[50px]">4.59</span>
    <span className="w-[41px]">标高:</span>
    <span className="w-[99px]">-0.47~4.12</span>
    <span className="w-[60px]">选中图元:</span>
    <span className="w-[50px]">2(9)</span>
    <span className="w-[60px]">隐藏图元:</span>
    <span className="w-[50px]">0</span>
    <Btn w="w-[25px]"><svg width="14" height="14" viewBox="0 0 14 14" fill="none" stroke="#555"><path d="M2 1v11h11M2 9h3v3" /></svg></Btn>
    <Btn w="w-[36px]" on className="ml-[3px]"><svg width="15" height="16" viewBox="0 0 15 16" fill="none" stroke="#555"><rect x="2.500" y="2.500" width="12" height="12" rx="1" /><circle cx="2.500" cy="2.500" r="1.500" stroke={B} /></svg><Caret c="#555" /></Btn>
    <Btn w="w-[25px]" className="ml-[6px]"><svg width="16" height="16" viewBox="0 0 16 16" fill="none" stroke="#999"><path d="M1 1l14 14M15 1L1 15" /></svg></Btn>
    <Btn w="w-[36px]" className="ml-[6px]"><svg width="15" height="14" viewBox="0 0 15 14" fill="none" stroke="#777"><path d="M1 12L12 3M1 12.500h12" /></svg><Caret c="#555" /></Btn>
    <Btn w="w-[36px]" className="ml-[3px]"><svg width="15" height="14" viewBox="0 0 15 14" fill="none" stroke="#555"><path d="M1 4h7M4 1v6" /><rect x="5" y="9" width="9" height="4" fill="#555" /></svg><Caret c="#555" /></Btn>
    <Btn w="w-[25px]" className="ml-[3px]"><svg width="15" height="15" viewBox="0 0 15 15" fill="none" stroke="#555"><rect x="1" y="2" width="10" height="8" strokeWidth="2" /><path d="M2 12h8" /><path d="M11 8l4 3-4 3z" fill="#555" /></svg></Btn>
    <Btn w="w-[25px]" className="ml-[3px]"><svg width="15" height="15" viewBox="0 0 15 15" fill="none" stroke="#777"><path d="M2 13C2 8 6 4 13 2" /><circle cx="2" cy="13" r="1" /><circle cx="13" cy="2" r="1" /><path d="M9 7l4 3-4 2z" fill="#555" stroke="#555" /></svg></Btn>
  </div>
);

export default function App() {
  return (
    <div className="w-[1895px] h-[1024px] overflow-hidden flex flex-col bg-white font-['Noto_Sans_CJK_SC','Noto_Sans',sans-serif]">
      <Ribbon />
      <Toolbar />
      <div className="h-[835px] flex shrink-0 bg-[#f0f0f0]">
        <Nav />
        <div className="w-[280px] ml-[5px] h-full flex flex-col shrink-0">
          <CompPanel />
          <div className="h-[4px] shrink-0" />
          <PropPanel />
        </div>
        <div className="w-[4px] h-full bg-white shrink-0 flex flex-col">
          <div className="h-[369px]" />
          <div className="h-[100px] bg-[#6b7480]" />
        </div>
        <Canvas />
      </div>
      <Status />
      <div className="flex-1 bg-gradient-to-r from-[#cfeccf] via-[#dfe8f5] to-[#c8f0d8]" />
    </div>
  );
}
